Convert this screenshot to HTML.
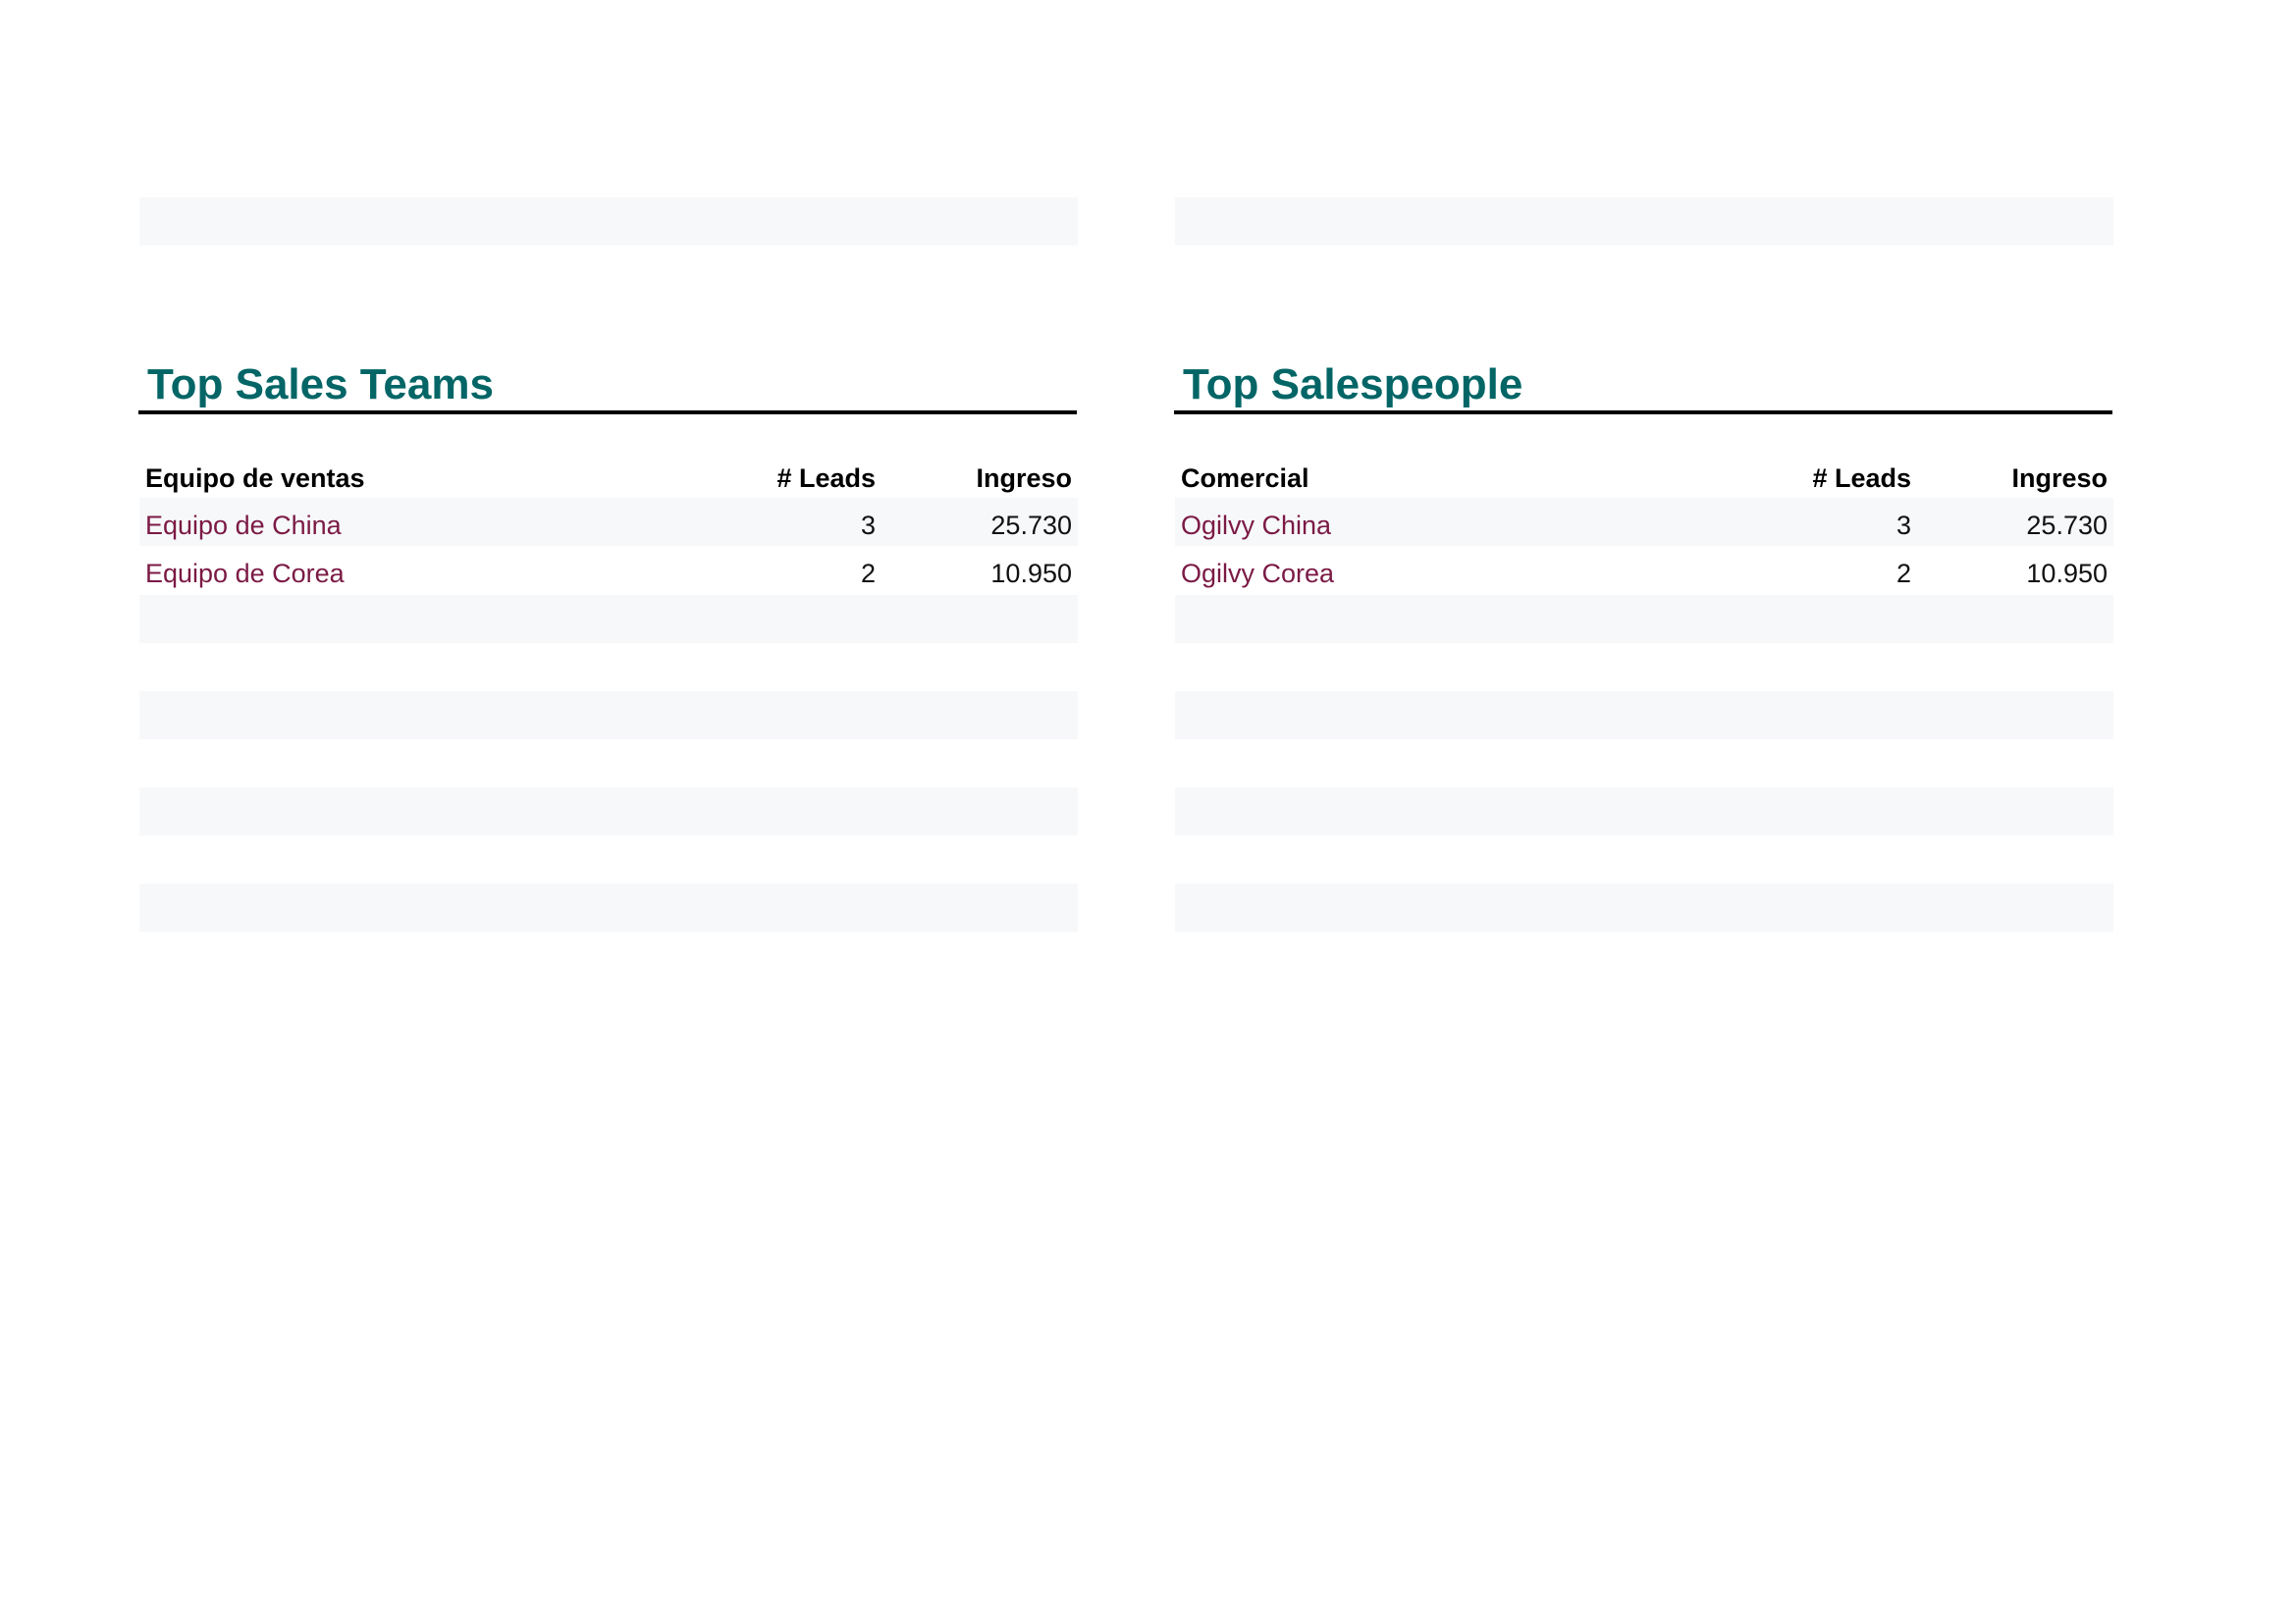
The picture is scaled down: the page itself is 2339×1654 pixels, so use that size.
<!DOCTYPE html>
<html><head><meta charset="utf-8"><style>
body{margin:0;width:2339px;height:1654px;background:#fff;position:relative;overflow:hidden;font-family:"Liberation Sans",Arial,sans-serif}
.b{position:absolute;background:#f7f8fa;height:49px;width:956px}
.t{position:absolute;font-size:44px;line-height:44px;font-weight:bold;color:#036566;top:370px}
.r{position:absolute;height:4px;background:#000;top:418px;width:956px}
.row{position:absolute;width:956px;height:49px;line-height:49px;font-size:27px}
.row span{position:absolute}
.h{font-weight:bold;color:#000}
.c1{left:6px}.c2{right:206px}.c3{right:6px}
.n{color:#7b1a45}
.v{color:#111}
</style></head><body>
<div class="b" style="left:142px;top:201px"></div><div class="b" style="left:1197px;top:201px"></div>
<div class="b" style="left:142px;top:507px"></div><div class="b" style="left:1197px;top:507px"></div>
<div class="b" style="left:142px;top:606px"></div><div class="b" style="left:1197px;top:606px"></div>
<div class="b" style="left:142px;top:704px"></div><div class="b" style="left:1197px;top:704px"></div>
<div class="b" style="left:142px;top:802px"></div><div class="b" style="left:1197px;top:802px"></div>
<div class="b" style="left:142px;top:900px"></div><div class="b" style="left:1197px;top:900px"></div>

<div class="t" style="left:150px">Top Sales Teams</div>
<div class="t" style="left:1205px">Top Salespeople</div>
<div class="r" style="left:141px"></div><div class="r" style="left:1196px"></div>

<div class="row h" style="left:142px;top:463px"><span class="c1">Equipo de ventas</span><span class="c2"># Leads</span><span class="c3">Ingreso</span></div>
<div class="row" style="left:142px;top:511px"><span class="c1 n">Equipo de China</span><span class="c2 v">3</span><span class="c3 v">25.730</span></div>
<div class="row" style="left:142px;top:560px"><span class="c1 n">Equipo de Corea</span><span class="c2 v">2</span><span class="c3 v">10.950</span></div>

<div class="row h" style="left:1197px;top:463px"><span class="c1">Comercial</span><span class="c2"># Leads</span><span class="c3">Ingreso</span></div>
<div class="row" style="left:1197px;top:511px"><span class="c1 n">Ogilvy China</span><span class="c2 v">3</span><span class="c3 v">25.730</span></div>
<div class="row" style="left:1197px;top:560px"><span class="c1 n">Ogilvy Corea</span><span class="c2 v">2</span><span class="c3 v">10.950</span></div>
</body></html>
